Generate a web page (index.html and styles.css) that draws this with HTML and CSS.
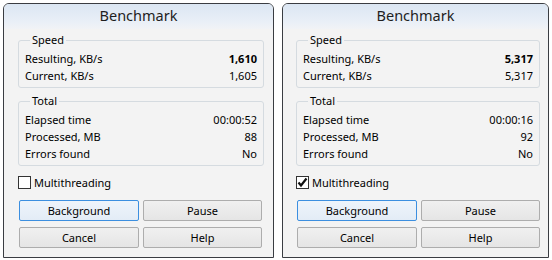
FILE: index.html
```html
<!DOCTYPE html>
<html lang="en">
<head>
  <meta charset="UTF-8">
  <title>Benchmark</title>
  <link rel="stylesheet" href="styles.css">
</head>
<body>
<div class="screens">
  <div class="window window-a">
    <div class="titlebar">Benchmark</div>
    <div class="client">
      <fieldset class="group">
        <legend>Speed</legend>
        <div class="row"><span>Resulting, KB/s</span><b>1,610</b></div>
        <div class="row"><span>Current, KB/s</span><span>1,605</span></div>
      </fieldset>
      <fieldset class="group">
        <legend>Total</legend>
        <div class="row"><span>Elapsed time</span><span>00:00:52</span></div>
        <div class="row"><span>Processed, MB</span><span>88</span></div>
        <div class="row"><span>Errors found</span><span>No</span></div>
      </fieldset>
      <label class="check"><span class="box"></span>Multithreading</label>
      <div class="buttons">
        <button class="btn default">Background</button>
        <button class="btn">Pause</button>
        <button class="btn">Cancel</button>
        <button class="btn">Help</button>
      </div>
    </div>
  </div>

  <div class="window window-b">
    <div class="titlebar">Benchmark</div>
    <div class="client">
      <fieldset class="group">
        <legend>Speed</legend>
        <div class="row"><span>Resulting, KB/s</span><b>5,317</b></div>
        <div class="row"><span>Current, KB/s</span><span>5,317</span></div>
      </fieldset>
      <fieldset class="group">
        <legend>Total</legend>
        <div class="row"><span>Elapsed time</span><span>00:00:16</span></div>
        <div class="row"><span>Processed, MB</span><span>92</span></div>
        <div class="row"><span>Errors found</span><span>No</span></div>
      </fieldset>
      <label class="check"><span class="box">
        <svg width="11" height="11" viewBox="0 0 11 11"><path d="M1.5 5.5 L4 8.5 L9.5 1.5" fill="none" stroke="#111" stroke-width="2.2"/></svg>
      </span>Multithreading</label>
      <div class="buttons">
        <button class="btn default">Background</button>
        <button class="btn">Pause</button>
        <button class="btn">Cancel</button>
        <button class="btn">Help</button>
      </div>
    </div>
  </div>
</div>
</body>
</html>
```

FILE: styles.css
```css
* { margin: 0; padding: 0; box-sizing: border-box; }
body {
  background: #fff;
  font-family: 'Noto Sans', 'Open Sans', sans-serif;
  font-size: 11px;
  color: #000;
}
.screens {
  display: flex;
  gap: 8px;
  padding: 3px 0 0 3px;
}
.window {
  height: 255px;
  border: 1px solid #3a3d42;
  border-radius: 6px 6px 0 0;
  background: #f3f3f3;
  display: flex;
  flex-direction: column;
}
.window-a { width: 271px; }
.window-b { width: 267px; }
.titlebar {
  height: 25px;
  text-align: center;
  font-size: 14.5px;
  line-height: 23px;
  color: #1e1e1e;
  border-radius: 5px 5px 0 0;
  background: linear-gradient(#dbe6f3, #e9eff7 70%, #f1f3f6);
}
.window-a .client { padding: 4px 9px 0 14px; }
.window-b .client { padding: 4px 8px 0 13px; }
.group {
  border: 1px solid #d5dbe0;
  border-radius: 3px;
  padding: 3px 6px 3px 6px;
  margin-bottom: 6px;
}
.group legend {
  margin-left: 5px;
  padding: 0 2px;
  line-height: 14px;
}
.row {
  display: flex;
  justify-content: space-between;
  height: 17px;
  line-height: 17px;
}
.row b { font-weight: bold; }
.check {
  display: flex;
  align-items: center;
  gap: 3px;
  margin-top: 8px;
  height: 16px;
}
.box {
  width: 13px;
  height: 13px;
  border: 1px solid #333;
  background: #fff;
  display: flex;
  align-items: center;
  justify-content: center;
}
.buttons {
  display: grid;
  grid-template-columns: 120px 119px;
  column-gap: 4px;
  row-gap: 6px;
  margin-top: 10px;
  padding-left: 1px;
}
.btn {
  height: 21px;
  font: inherit;
  color: #000;
  border: 1px solid #adadad;
  border-radius: 2px;
  background: linear-gradient(#f0f0f0, #e5e5e5);
}
.btn.default {
  border-color: #3c8fe0;
  background: linear-gradient(#eef4fb, #e3ecf6);
}
```
